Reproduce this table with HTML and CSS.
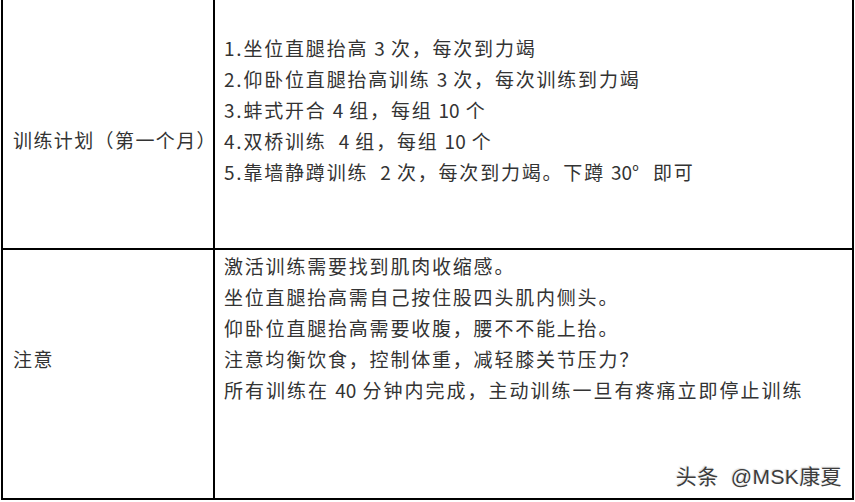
FILE: index.html
```html
<!DOCTYPE html>
<html lang="zh-CN">
<head>
<meta charset="utf-8">
<title>训练计划</title>
<link rel="stylesheet" href="styles.css">
</head>
<body>
<div class="page">
  <div class="table">
    <div class="row row-plan">
      <div class="cell label label-plan">训练计划（第一个月）</div>
      <div class="cell content content-plan">
        <p>1.坐位直腿抬高 <span class="num">3</span> 次，每次到力竭</p>
        <p>2.仰卧位直腿抬高训练 <span class="num">3</span> 次，每次训练到力竭</p>
        <p>3.蚌式开合 <span class="num">4</span> 组，每组 <span class="num">10</span> 个</p>
        <p>4.双桥训练&nbsp; <span class="num">4</span> 组，每组 <span class="num">10</span> 个</p>
        <p>5.靠墙静蹲训练&nbsp; <span class="num">2</span> 次，每次到力竭。下蹲 <span class="num">30</span>°&nbsp; 即可</p>
      </div>
    </div>
    <div class="row row-note">
      <div class="cell label label-note">注意</div>
      <div class="cell content content-note">
        <p>激活训练需要找到肌肉收缩感。</p>
        <p>坐位直腿抬高需自己按住股四头肌内侧头。</p>
        <p>仰卧位直腿抬高需要收腹，腰不不能上抬。</p>
        <p>注意均衡饮食，控制体重，减轻膝关节压力？</p>
        <p class="wide">所有训练在 <span class="num">40</span> 分钟内完成，主动训练一旦有疼痛立即停止训练</p>
      </div>
    </div>
  </div>
  <div class="watermark">头条 @MSK康夏</div>
</div>
</body>
</html>
```

FILE: styles.css
```css
html, body {
  margin: 0;
  padding: 0;
  background: #fff;
}

.page {
  position: relative;
  width: 855px;
  height: 502px;
  overflow: hidden;
  font-family: "Noto Sans CJK SC", "Noto Sans", sans-serif;
  color: #333;
}

.table {
  margin-left: 1px;
  width: 853px;
  box-sizing: border-box;
  border-left: 2px solid #000;
  border-right: 2px solid #000;
  border-bottom: 2px solid #000;
}

.row {
  display: grid;
  grid-template-columns: 210px 1fr;
  height: 248px;
}

.row-plan {
  border-bottom: 2px solid #000;
}

.cell {
  box-sizing: border-box;
  font-size: 19px;
  letter-spacing: 1.8px;
  line-height: 31px;
}

.num {
  letter-spacing: 0;
}

.label {
  padding-left: 10px;
  white-space: nowrap;
  letter-spacing: 1.4px;
}

.label-plan {
  padding-top: 124px;
}

.label-note {
  padding-top: 93px;
}

.content {
  border-left: 2px solid #000;
  padding-left: 9px;
}

.content p {
  margin: 0;
  white-space: nowrap;
}

.content p.wide {
  letter-spacing: 2px;
}

.content-plan {
  padding-top: 32px;
}

.content-note {
  padding-top: 0;
}

.watermark {
  position: absolute;
  right: 13px;
  bottom: 13px;
  font-family: "Liberation Sans", "Noto Sans CJK SC", sans-serif;
  font-size: 21px;
  line-height: 24px;
  word-spacing: 6px;
  letter-spacing: 0.4px;
  color: #3d3d3d;
  text-shadow: 1px 1px 1px rgba(255,255,255,0.9), -1px -1px 1px rgba(200,200,200,0.6);
}
```
